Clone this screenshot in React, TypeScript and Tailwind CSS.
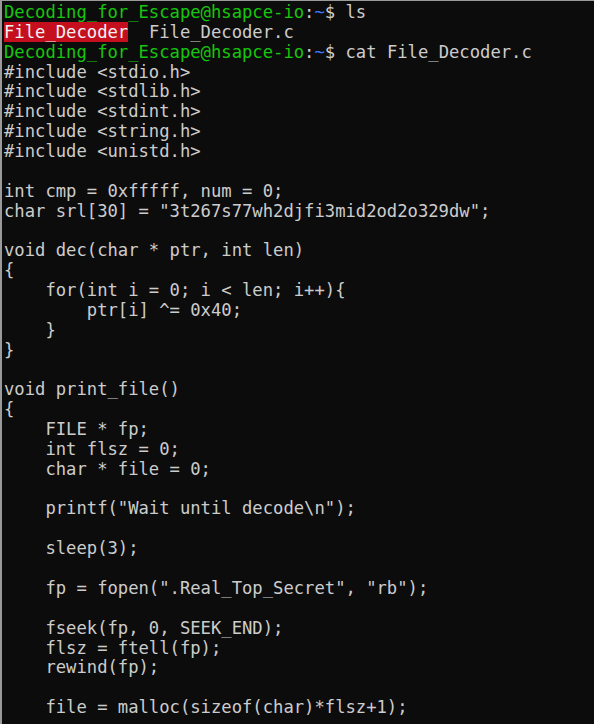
const codeLines = [
    "#include <stdio.h>",
    "#include <stdlib.h>",
    "#include <stdint.h>",
    "#include <string.h>",
    "#include <unistd.h>",
    "",
    "int cmp = 0xfffff, num = 0;",
    "char srl[30] = \"3t267s77wh2djfi3mid2od2o329dw\";",
    "",
    "void dec(char * ptr, int len)",
    "{",
    "    for(int i = 0; i < len; i++){",
    "        ptr[i] ^= 0x40;",
    "    }",
    "}",
    "",
    "void print_file()",
    "{",
    "    FILE * fp;",
    "    int flsz = 0;",
    "    char * file = 0;",
    "",
    "    printf(\"Wait until decode\\n\");",
    "",
    "    sleep(3);",
    "",
    "    fp = fopen(\".Real_Top_Secret\", \"rb\");",
    "",
    "    fseek(fp, 0, SEEK_END);",
    "    flsz = ftell(fp);",
    "    rewind(fp);",
    "",
    "    file = malloc(sizeof(char)*flsz+1);",
];

const Prompt = ({ cmd }: { cmd: string }) => (
    <div>
        <span className="text-[#16c60c]">Decoding_for_Escape@hsapce-io</span>
        <span className="text-[#cccccc]">:</span>
        <span className="text-[#3b78ff]">~</span>
        <span className="text-[#cccccc]">$ {cmd}</span>
    </div>
);

const App = () => {
    return (
        <div className="w-[594px] h-[724px] overflow-hidden bg-[#0c0c0c] border-l-2 border-t border-[#9a9a9a]">
            <div className="pl-[2px] pt-[2px] text-[#cccccc] text-[17.2px] leading-[19.86px] whitespace-pre font-['DejaVu_Sans_Mono',monospace]">
                <Prompt cmd="ls" />
                <div>
                    <span className="bg-[#c50f1f] text-[#f2f2f2]">File_Decoder</span>
                    <span>  File_Decoder.c</span>
                </div>
                <Prompt cmd="cat File_Decoder.c" />
                {codeLines.map((line, i) => (
                    <div key={i}>{line === "" ? " " : line}</div>
                ))}
            </div>
        </div>
    );
};

export default App;
